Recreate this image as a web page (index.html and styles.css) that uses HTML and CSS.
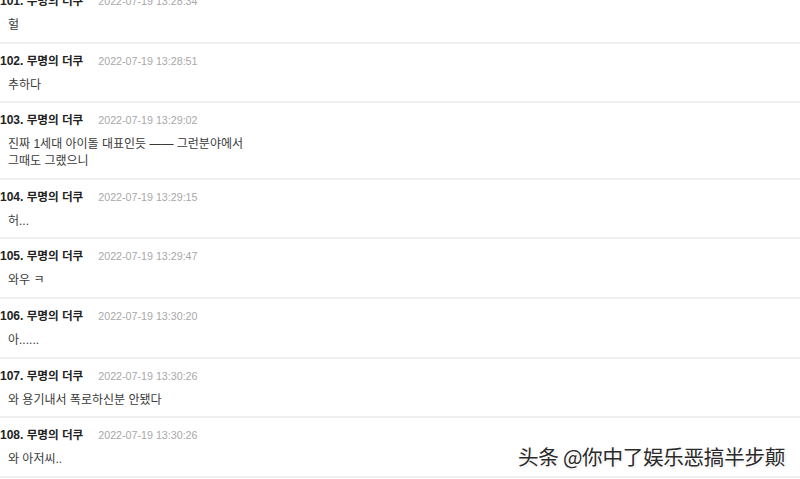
FILE: index.html
```html
<!DOCTYPE html>
<html>
    <head>
        <title>댓글</title>
        <meta charset="UTF-8">
        <meta name="viewport" content="width=device-width, initial-scale=1.0">
        <link rel="stylesheet" href="styles.css">
    </head>
    <body>
        <div id="main">

            <div class="replyList">
                <div class="reply">
                    <div class="rhead"><span class="num">101.</span> <span class="nick">무명의 더쿠</span><span class="date">2022-07-19 13:28:34</span></div>
                    <div class="rbody">헐</div>
                </div>
                <div class="reply">
                    <div class="rhead"><span class="num">102.</span> <span class="nick">무명의 더쿠</span><span class="date">2022-07-19 13:28:51</span></div>
                    <div class="rbody">추하다</div>
                </div>
                <div class="reply">
                    <div class="rhead"><span class="num">103.</span> <span class="nick">무명의 더쿠</span><span class="date">2022-07-19 13:29:02</span></div>
                    <div class="rbody">진짜 1세대 아이돌 대표인듯 —— 그런분야에서<br>그때도 그랬으니</div>
                </div>
                <div class="reply">
                    <div class="rhead"><span class="num">104.</span> <span class="nick">무명의 더쿠</span><span class="date">2022-07-19 13:29:15</span></div>
                    <div class="rbody">허...</div>
                </div>
                <div class="reply">
                    <div class="rhead"><span class="num">105.</span> <span class="nick">무명의 더쿠</span><span class="date">2022-07-19 13:29:47</span></div>
                    <div class="rbody">와우 ㅋ</div>
                </div>
                <div class="reply">
                    <div class="rhead"><span class="num">106.</span> <span class="nick">무명의 더쿠</span><span class="date">2022-07-19 13:30:20</span></div>
                    <div class="rbody">아......</div>
                </div>
                <div class="reply">
                    <div class="rhead"><span class="num">107.</span> <span class="nick">무명의 더쿠</span><span class="date">2022-07-19 13:30:26</span></div>
                    <div class="rbody">와 용기내서 폭로하신분 안됐다</div>
                </div>
                <div class="reply">
                    <div class="rhead"><span class="num">108.</span> <span class="nick">무명의 더쿠</span><span class="date">2022-07-19 13:30:26</span></div>
                    <div class="rbody">와 아저씨..</div>
                </div>
            </div>

            <!-- watermark -->
            <div class="mark">头条 @你中了娱乐恶搞半步颠</div>

        </div>
    </body>
</html>
```

FILE: styles.css
```css
body {
    margin: 0;
    background: #ffffff;
    font-family: "Liberation Sans", "Noto Sans CJK KR", sans-serif;
    overflow: hidden;
}

#main {
    position: relative;
    width: 800px;
    height: 479px;
    overflow: hidden;
}

.replyList {
    margin-top: -16px;
}

.reply {
    padding: 9px 0 7.6px 0;
    border-bottom: 2px solid #efefef;
}

.rhead {
    height: 16px;
    line-height: 16px;
    font-size: 12px;
    font-weight: bold;
    color: #222222;
    white-space: nowrap;
}

.rhead .nick {
    font-size: 11.6px;
}

.rhead .date {
    margin-left: 15px;
    font-size: 10.7px;
    font-weight: normal;
    color: #a8a8a8;
}

.rbody {
    margin-top: 8px;
    padding-left: 8px;
    line-height: 17px;
    font-size: 12px;
    color: #3a3a3a;
}

.mark {
    position: absolute;
    left: 518px;
    top: 442px;
    font-family: "Noto Sans CJK SC", sans-serif;
    font-size: 20.6px;
    line-height: 28px;
    color: #2a2a2a;
    letter-spacing: -0.3px;
    text-shadow: 1px 1px 0 #ffffff, -1px -1px 0 #ffffff, 1px 1px 2px #cccccc;
}
```
